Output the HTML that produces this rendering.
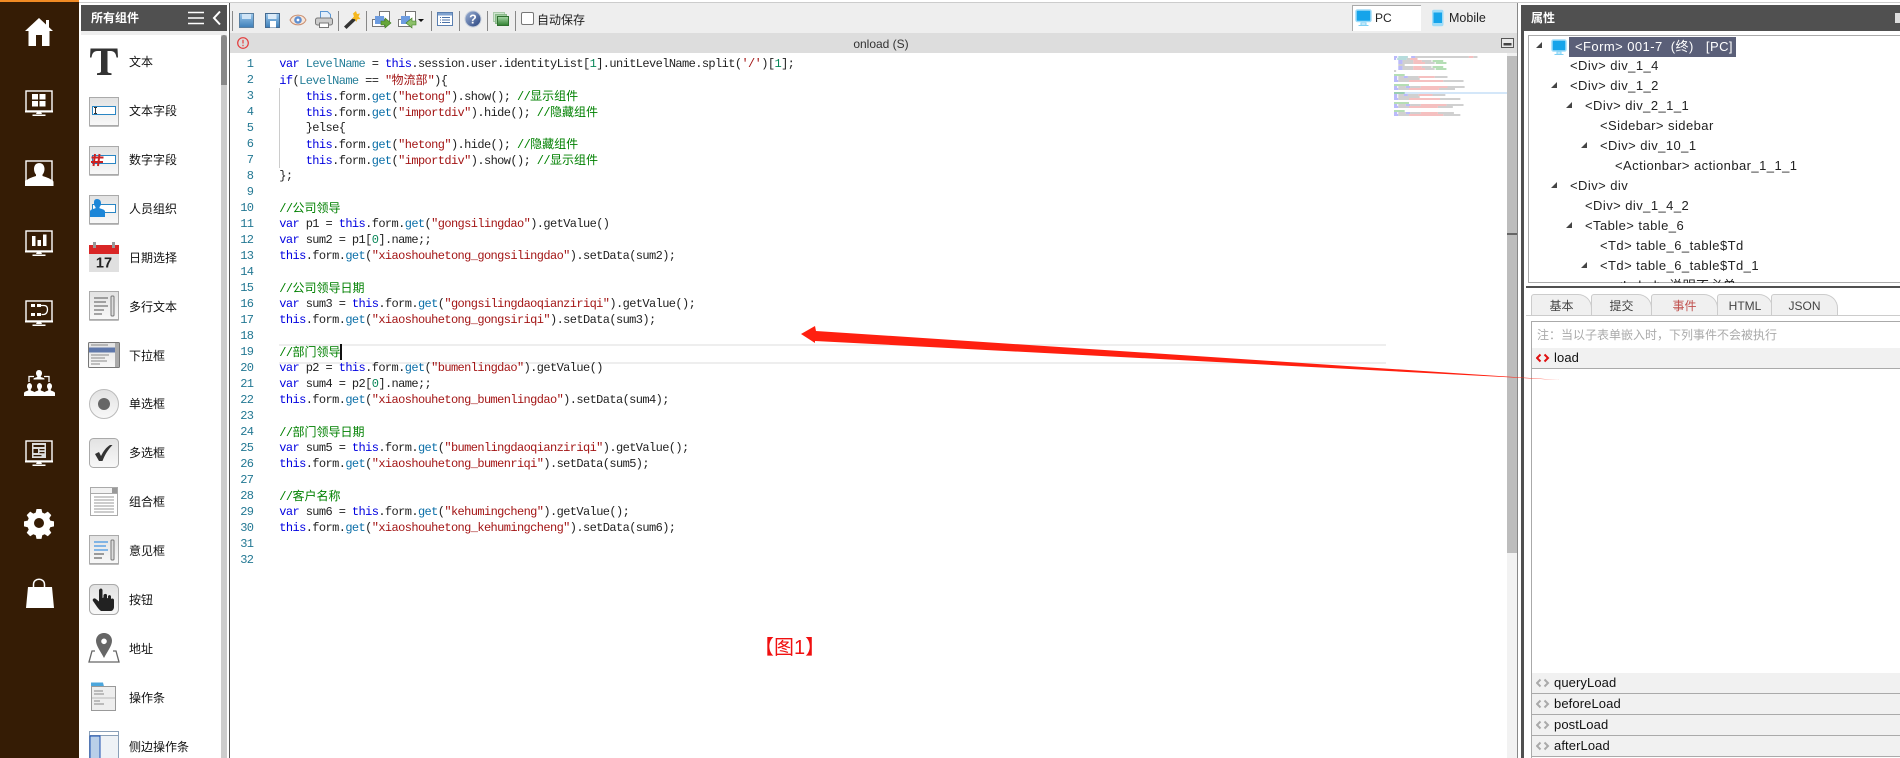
<!DOCTYPE html>
<html lang="zh">
<head>
<meta charset="utf-8">
<title>onload (S)</title>
<style>
html,body{margin:0;padding:0;width:1900px;height:758px;overflow:hidden;background:#fff}
body{position:relative;font-family:"Liberation Sans","Noto Sans CJK SC",sans-serif;font-size:12px;color:#111}
.a{position:absolute}
.p{position:absolute;left:129px;height:16px;line-height:16px;font-size:12px;color:#111;white-space:nowrap}
#code{position:absolute;left:279.3px;top:56px;font-family:"Liberation Mono","Noto Sans CJK SC",monospace;font-size:12px;line-height:16px;letter-spacing:-.6px;color:#222}
#code div{height:16px;white-space:pre;overflow:visible}
#code b{font-family:"Noto Sans CJK SC",sans-serif;font-weight:400;letter-spacing:0;line-height:16px}
#nums{position:absolute;left:230px;width:23.4px;top:56px;text-align:right;font-family:"Liberation Mono",monospace;font-size:12px;line-height:16px;letter-spacing:-.6px;color:#237893}
.k{color:#0000e0}.s{color:#a31515}.c{color:#008000}.t{color:#267f99}.g{color:#0b6fa8}.n{color:#098658}
.tr{position:absolute;height:20px;line-height:20px;font-size:13px;letter-spacing:.44px;color:#222;white-space:pre}
.tab{position:absolute;top:294px;height:20px;line-height:22px;background:#f0f0f0;border:1px solid #ccc;border-bottom:0;border-radius:3px 14px 0 0;text-align:center;font-size:12px;color:#444;box-sizing:content-box}
.ev{position:absolute;left:1532px;right:0;height:20px;background:#f1f1f1;border-bottom:1px solid #aaa;line-height:20px;font-size:13px;letter-spacing:.1px;color:#111}
.ev span{position:absolute;left:22px}
.ev svg{position:absolute;left:4px;top:5px}
</style>
</head>
<body>
<!-- page top lines -->
<div class="a" style="left:79px;top:2px;width:1821px;height:1px;background:#ccc"></div>
<!-- left rail -->
<div class="a" style="left:0;top:0;width:79px;height:758px;background:#351c05"></div>
<div class="a" style="left:0;top:0;width:79px;height:2px;background:#f08a24"></div>

<svg class="a" style="left:0;top:0" width="79" height="758" viewBox="0 0 79 758">
<defs>
<g id="mon"><rect x="1" y="1" width="26" height="20" fill="none" stroke="#fff" stroke-width="1.4"/><rect x="0" y="20.500" width="28" height="2" fill="#fff"/><path d="M12 22h4l1 2h-6z" fill="#fff"/><rect x="7.500" y="24.500" width="13" height="1.500" fill="#fff"/></g>
<linearGradient id="gb" x1="0" y1="0" x2="0" y2="1"><stop offset="0" stop-color="#e2e2e2"/><stop offset="1" stop-color="#f8f8f8"/></linearGradient>
<linearGradient id="gs" x1="0" y1="0" x2="0" y2="1"><stop offset="0" stop-color="#9cc8ec"/><stop offset="1" stop-color="#3e7fb8"/></linearGradient>
<linearGradient id="gh" x1="0" y1="0" x2="1" y2="1"><stop offset="0" stop-color="#9fb4d8"/><stop offset="1" stop-color="#24407c"/></linearGradient>
<linearGradient id="gg" x1="0" y1="0" x2="0" y2="1"><stop offset="0" stop-color="#a8d8a8"/><stop offset="1" stop-color="#2f7f2f"/></linearGradient>
</defs>
<path fill="#fff" d="M39 18 25 31h3.500v15h7.500v-11h6v11h7.500V31H53l-4-3.700V20h-3v4.500z"/>
<use href="#mon" x="25" y="90"/><path fill="#fff" d="M32 94h6v5.500h-6zM39.500 94h6v5.500h-6zM32 101h6v5.500h-6zM39.500 101h6v5.500h-6z"/>
<use href="#mon" x="25" y="160"/><path fill="#fff" d="M39 163c3.800 0 5.500 2.800 5.500 6 0 2.600-1 4.400-2 5.600v1.400c3 1 6.500 2 8.500 3.500 1 .8 2.500 1 2.500 2.500v4H25v-4c0-1.500 1.500-1.700 2.500-2.500 2-1.500 5.500-2.500 8.500-3.500v-1.400c-1-1.200-2-3-2-5.600 0-3.200 1.700-6 5.500-6z"/>
<use href="#mon" x="25" y="230"/><path fill="#fff" d="M32 236h3.500v10H32zM37.500 240h3.500v6h-3.500zM43 234.500h3.500V246H43z"/>
<use href="#mon" x="25" y="300"/><path fill="#fff" d="M31 304h4v3h-4zM37 304h4v3h-4zM31 313h4v3h-4zM37 313h4v3h-4z"/><path fill="none" stroke="#fff" stroke-width="1.300" d="M41 305.500h3c3 0 3.500 2 3.500 4s-1 5-4 5h-2"/>
<g fill="#fff"><path d="M39 370c2 0 3 1.500 3 3.200 0 1.300-.6 2.300-1.200 3v.8c1.300.5 2.700.8 3.700 1.500v1H33.500v-1c1-.7 2.400-1 3.700-1.500v-.8c-.6-.7-1.200-1.700-1.200-3 0-1.700 1-3.200 3-3.200z"/><path id="op" d="M29 383c2 0 3 1.500 3 3.200 0 1.300-.6 2.300-1.200 3v1.300c1.500.6 3.400 1 4.200 2.200v3.300H24v-3.300c.8-1.200 2.700-1.600 4.200-2.200v-1.300c-.6-.7-1.200-1.700-1.200-3 0-1.700 1-3.200 3-3.200z"/><use href="#op" x="10"/><use href="#op" x="20"/></g>
<path fill="none" stroke="#fff" stroke-width="1.300" d="M29 382v-5.500h5M49 382v-5.500h-5"/>
<use href="#mon" x="25" y="440"/><path fill="#ddd" d="M32 443h14v15H32z"/><path fill="#351c05" d="M33.500 445h11v2h-11zM33.500 449h4.500v4h-4.500zM39.500 449h5v1.200h-5zM39.500 452h5v1.200h-5zM33.500 455h8v1.200h-8z"/>
<path fill="#fff" fill-rule="evenodd" d="M36.500 509h5l.8 3.600 2.400 1 3.100-2 3.500 3.500-2 3.100 1 2.400 3.700.8v5l-3.700.8-1 2.400 2 3.100-3.500 3.500-3.100-2-2.400 1-.8 3.700h-5l-.8-3.700-2.400-1-3.100 2-3.500-3.500 2-3.100-1-2.400-3.700-.8v-5l3.700-.8 1-2.400-2-3.100 3.500-3.500 3.100 2 2.400-1zM39 518a5 5 0 1 0 0 10 5 5 0 0 0 0-10z"/>
<path fill="#fff" d="M28 587h24l2 21H26z"/>
<path fill="none" stroke="#fff" stroke-width="1.500" d="M33.500 590v-5.500c0-7 11-7 11 0v5.500"/>
</svg>

<!-- component panel -->
<div class="a" style="left:81px;top:5px;width:146px;height:26px;background:#505050"></div>
<div class="a" style="left:91px;top:10px;color:#fff;font-weight:700;font-size:12px;line-height:16px">所有组件</div>
<svg class="a" style="left:187px;top:10px" width="38" height="16"><path d="M1 2.500h16M1 8h16M1 13.500h16" stroke="#fff" stroke-width="1.500"/><path d="M33 1.500 27 8l6 6.500" fill="none" stroke="#fff" stroke-width="2"/></svg>
<div class="a" style="left:81px;top:31px;width:146px;height:4px;background:#eee"></div>
<div class="a" style="left:221px;top:35px;width:6px;height:723px;background:#ccc"></div>
<div class="a" style="left:221px;top:35px;width:6px;height:50px;background:#888;border-radius:3px 3px 0 0"></div>
<div class="a" style="left:229px;top:3px;width:1px;height:755px;background:#555"></div>

<div class="p" style="top:54px">文本</div>
<div class="p" style="top:103px">文本字段</div>
<div class="p" style="top:152px">数字字段</div>
<div class="p" style="top:201px">人员组织</div>
<div class="p" style="top:250px">日期选择</div>
<div class="p" style="top:299px">多行文本</div>
<div class="p" style="top:348px">下拉框</div>
<div class="p" style="top:396px">单选框</div>
<div class="p" style="top:445px">多选框</div>
<div class="p" style="top:494px">组合框</div>
<div class="p" style="top:543px">意见框</div>
<div class="p" style="top:592px">按钮</div>
<div class="p" style="top:641px">地址</div>
<div class="p" style="top:690px">操作条</div>
<div class="p" style="top:739px">侧边操作条</div>

<svg class="a" style="left:0;top:0" width="230" height="758" viewBox="0 0 230 758">
<defs>
<g id="bx"><rect x="0" y="1" width="30" height="29" rx="1" fill="#bbb"/><rect x=".5" y=".5" width="29" height="28" fill="url(#gb)" stroke="#aaa"/></g>
<g id="fld"><rect x="3.500" y="9.500" width="23" height="8" fill="#fff" stroke="#2a86c4"/></g>
</defs>
<path transform="translate(89 47)" fill="#333" d="M1.500 1.500h27l.5 9h-1.500c-.6-4-2.100-6.500-6-6.500H18.500v20c0 1.700 1 2 4 2.300V28H8v-1.700c3-.3 4-.6 4-2.300V4H8.500c-3.900 0-5.400 2.500-6 6.500H1z"/>
<g transform="translate(89 97)"><use href="#bx"/><use href="#fld"/><path d="M5 10.500h3M6.500 10.500v6M5 16.500h3" stroke="#333" fill="none"/></g>
<g transform="translate(89 146)"><use href="#bx"/><use href="#fld"/><path d="M6 8 4.500 20M10.500 8 9 20M2.500 11.500h12M2 16h12" stroke="#cc2222" stroke-width="2" fill="none"/></g>
<g transform="translate(89 195)"><use href="#bx"/><use href="#fld"/><path fill="#1c86d8" d="M8 4c2.800 0 4 2 4 4.200 0 1.700-.7 3-1.500 3.800v1.200c2 .7 5.500 1.300 5.500 3.300V22H1v-5.500c0-2 3.500-2.600 5.500-3.300V12C5.700 11.200 5 9.900 5 8.200 5 6 5.200 4 8 4z"/></g>
<g transform="translate(89 242)"><path d="M0 3h30v27H0z" fill="#e0e0e0"/><path d="M0 3h30v9H0z" fill="#d92626"/><path d="M4 0h3v6H4zM23 0h3v6h-3z" fill="#999"/><text x="15" y="25.500" text-anchor="middle" font-family="Liberation Sans" font-weight="700" font-size="14.500" fill="#222">17</text></g>
<g transform="translate(89 291)"><use href="#bx"/><path d="M5 7h14M5 11h12M5 15h14M5 19h10M5 23h8" stroke="#555" fill="none"/><rect x="22" y="5" width="3" height="20" rx="1" fill="#ddd" stroke="#777"/></g>
<g transform="translate(88 342)"><rect x=".5" y=".5" width="31" height="25" rx="1" fill="url(#gb)" stroke="#777"/><rect x="1" y="5.500" width="26" height="5" fill="#5f78ab"/><path d="M3 3h17M3 13h18M3 16h14M3 19h16M3 22h9" stroke="#888" fill="none"/><rect x="27" y="1" width="4" height="24" fill="#aaa"/></g>
<g transform="translate(89 389)"><circle cx="15" cy="15" r="14.500" fill="url(#gb)" stroke="#bbb"/><circle cx="15" cy="15" r="6" fill="#666"/></g>
<g transform="translate(89 438)"><rect x=".5" y=".5" width="29" height="29" rx="4" fill="url(#gb)" stroke="#aaa"/><path d="M6 16l4-2 2 4c2.500-5 5-8.500 9-11h2.500c-4.500 4.500-7.500 9.500-10 16h-3.500z" fill="#333"/></g>
<g transform="translate(90 487)"><rect x=".5" y=".5" width="27" height="28" fill="#fff" stroke="#aaa"/><rect x=".5" y=".5" width="27" height="6" fill="#f2f2f2" stroke="#aaa"/><rect x="22" y="1" width="5" height="5" fill="#999"/><path d="M4 10h20M4 13h20M4 16h20M4 19h20M4 22h20M4 25h20" stroke="#999" fill="none"/></g>
<g transform="translate(89 535)"><use href="#bx"/><path d="M5 7h14M5 11h12M5 15h14" stroke="#1a7fe0" fill="none"/><path d="M5 19h10M5 23h8" stroke="#444" fill="none"/><rect x="22" y="5" width="3" height="20" rx="1" fill="#ddd" stroke="#777"/></g>
<g transform="translate(89 584)"><rect x=".5" y=".5" width="29" height="30" rx="5" fill="url(#gb)" stroke="#aaa"/><path d="M10 6c1-2 3-2 3.500 0V14l1-.5V11c1-1.500 3-1.500 3.500 0v3l1 .2V12c1-1.500 3-1 3 .5v2.500c1-1 3-.5 3 1V23c0 2-1.500 4-3 4H12c-3-2-5-6-8-10-1-1.800 1-3.500 3-2l3 2.500z" fill="#222"/></g>
<g transform="translate(89 633)"><path d="M6 18H3L0 29h30l-3-11h-3" fill="#fff" stroke="#666" stroke-width="1.300"/><path fill="#666" fill-rule="evenodd" d="M15 0c5 0 8 3.700 8 7.800C23 13 18 19 15 25 12 19 7 13 7 7.800 7 3.700 10 0 15 0zm0 5.500a2.800 2.800 0 1 0 0 5.600 2.800 2.800 0 0 0 0-5.600z"/></g>
<g transform="translate(91 682)"><path d="M0 .5h12l1 4H0z" fill="#4ba6dc"/><rect x=".5" y="4.500" width="24" height="24" fill="#eee" stroke="#999"/><path d="M3 9h9M3 12h10M3 19h6M3 22h10" stroke="#888" fill="none"/><path d="M1 16h23" stroke="#bbb" fill="none"/></g>
<g transform="translate(89 731)"><rect x=".5" y=".5" width="29" height="29" fill="#eef2f6" stroke="#8aa0b8"/><rect x=".5" y=".5" width="29" height="4" fill="#fff" stroke="#8aa0b8"/><rect x="1" y="5" width="10" height="25" fill="#b9cfe8" stroke="#1c4fb0"/></g>
</svg>

<!-- toolbar -->
<div class="a" style="left:230px;top:3px;width:1287px;height:30px;background:#eee"></div>
<svg class="a" style="left:232px;top:5px" width="300" height="28" viewBox="0 0 300 28">
<g stroke="#888"><path d="M.5 6v20M106.500 6v20M134.500 6v20M199.500 6v20M227.500 6v20M255.500 6v20M283.500 6v20"/></g>
<rect x="7.500" y="8.500" width="14" height="14" fill="url(#gs)" stroke="#5a7fa0"/><rect x="10" y="9" width="9" height="5" fill="#cfe4f6"/>
<rect x="33.500" y="8.500" width="14" height="14" fill="url(#gs)" stroke="#456a90"/><rect x="36" y="9" width="8.500" height="5" fill="#dcebf8"/><rect x="38" y="16" width="6" height="6.500" fill="#fff"/>
<path d="M58 15c3-6.500 13-6.500 16 0-3 6.500-13 6.500-16 0z" fill="#f6e6da" stroke="#c98e70"/><circle cx="66" cy="15" r="3.800" fill="#5f8fd0"/><circle cx="66" cy="15" r="1.400" fill="#fff"/>
<path d="M88.500 13V6.500h7l3 3V13" fill="#e4effa" stroke="#5b97d4"/><rect x="83.500" y="13" width="17" height="7" rx="2" fill="#ccc" stroke="#777"/><rect x="87.500" y="18" width="9" height="4.500" fill="#fff" stroke="#777"/>
<path d="M112 21.500 123 11l2.500 2.500L114.500 24z" fill="#333"/><path d="M124 6l1 3 3-.5-1.500 3 2 2.500-3 .2-1.300 2.800-1.200-2.800-3-.5 2-2.200-1-3z" fill="#f5b81f"/>
<rect x="147.500" y="6.500" width="10" height="10" fill="#fff" stroke="#777"/><rect x="140.500" y="14.500" width="12" height="7" fill="#fff" stroke="#777"/><rect x="143" y="11" width="9" height="8" fill="#6d9ce0"/><path d="M149 16h4v-3l6 5-6 5v-3h-4z" fill="#66a63a" stroke="#3e7a20" stroke-width=".6"/>
<rect x="173.500" y="6.500" width="10" height="10" fill="#fff" stroke="#777"/><rect x="166.500" y="14.500" width="12" height="7" fill="#fff" stroke="#777"/><rect x="169" y="11" width="9" height="8" fill="#6d9ce0"/><path d="M184 16h-4v-3l-6 5 6 5v-3h4z" fill="#8cc06a" stroke="#3e7a20" stroke-width=".6"/>
<path d="M186 14h6l-3 3z" fill="#111"/>
<rect x="205.500" y="7.500" width="15" height="13" fill="#fff" stroke="#5a7fb0"/><rect x="206" y="8" width="14" height="2.500" fill="#7fa2cf"/><path d="M208 12.500h1M210 12.500h8M208 15h1M210 15h8M208 17.500h1M210 17.500h8" stroke="#4a72a8"/>
<circle cx="241" cy="14" r="8" fill="url(#gh)" stroke="#c6cfdc"/><text x="241" y="18.500" text-anchor="middle" font-family="Liberation Sans" font-weight="700" font-size="12.500" fill="#fff">?</text>
<rect x="261.500" y="7.500" width="11" height="9" fill="#cfe6cf" stroke="#a9c9a9"/><rect x="263.500" y="9.500" width="11" height="9" fill="#9fcc9f" stroke="#8ab88a"/><rect x="265.500" y="11.500" width="11" height="9" fill="url(#gg)" stroke="#2f6f2f"/>
</svg>
<div class="a" style="left:521px;top:12px;width:11px;height:11px;border:1px solid #777;border-radius:2px;background:#fff"></div>
<div class="a" style="left:537px;top:12px;line-height:16px;font-size:12px;color:#222">自动保存</div>

<div class="a" style="left:1352px;top:5px;width:68px;height:25px;background:#fff;border:1px solid #aaa;border-width:1px 0 0 1px"></div>
<svg class="a" style="left:1355px;top:9px" width="18" height="18"><rect x="1" y="1" width="15" height="11.500" rx="1.500" fill="#16a4ea" stroke="#9fdcf8" stroke-width="1.500"/><path d="M6 14h5v2H6zM3.500 16.500h10" stroke="#7fd0f4" fill="#fff"/></svg>
<div class="a" style="left:1375px;top:10px;line-height:16px;font-size:12px;color:#222">PC</div>
<svg class="a" style="left:1431px;top:9px" width="14" height="18"><rect x="1" y=".8" width="11.500" height="16.500" rx="2" fill="#9fdcf8"/><rect x="2.500" y="3.500" width="8.500" height="10.500" fill="#16a4ea"/></svg>
<div class="a" style="left:1449px;top:10px;line-height:16px;font-size:12.500px;color:#222">Mobile</div>

<!-- editor title -->
<div class="a" style="left:230px;top:33px;width:1287px;height:20px;background:#ddd"></div>
<svg class="a" style="left:236px;top:36px" width="14" height="14"><circle cx="7" cy="7" r="5.300" fill="none" stroke="#e43a3a" stroke-width="1.200"/><path d="M7 3.800v3.700" stroke="#e43a3a" stroke-width="1.200"/><path d="M7 8.800v1.400" stroke="#e43a3a" stroke-width="1.200"/></svg>
<div class="a" style="left:845px;top:36px;width:72px;text-align:center;line-height:16px;font-size:12px;color:#333">onload (S)</div>
<svg class="a" style="left:1501px;top:38px" width="14" height="11"><rect x=".5" y=".5" width="12" height="9" fill="#e8e8e8" stroke="#555"/><rect x="2.500" y="5" width="8" height="2.500" fill="#444"/></svg>

<!-- current line -->
<div class="a" style="left:279px;top:344px;width:1107px;height:20px;box-sizing:border-box;border:2px solid #eee;border-width:2px 0"></div>
<div class="a" style="left:340px;top:344px;width:2px;height:16px;background:#111"></div>
<div class="a" style="left:279px;top:88px;width:1px;height:80px;background:#ccc"></div>

<div id="nums">1<br>2<br>3<br>4<br>5<br>6<br>7<br>8<br>9<br>10<br>11<br>12<br>13<br>14<br>15<br>16<br>17<br>18<br>19<br>20<br>21<br>22<br>23<br>24<br>25<br>26<br>27<br>28<br>29<br>30<br>31<br>32</div>

<div id="code">
<div><span class="k">var</span> <span class="t">LevelName</span> = <span class="k">this</span>.session.user.identityList[<span class="n">1</span>].unitLevelName.split(<span class="s">'/'</span>)[<span class="n">1</span>];</div>
<div><span class="k">if</span>(<span class="t">LevelName</span> == <span class="s">"<b>物流部</b>"</span>){</div>
<div>    <span class="k">this</span>.form.<span class="g">get</span>(<span class="s">"hetong"</span>).show(); <span class="c">//<b>显示组件</b></span></div>
<div>    <span class="k">this</span>.form.<span class="g">get</span>(<span class="s">"importdiv"</span>).hide(); <span class="c">//<b>隐藏组件</b></span></div>
<div>    }else{</div>
<div>    <span class="k">this</span>.form.<span class="g">get</span>(<span class="s">"hetong"</span>).hide(); <span class="c">//<b>隐藏组件</b></span></div>
<div>    <span class="k">this</span>.form.<span class="g">get</span>(<span class="s">"importdiv"</span>).show(); <span class="c">//<b>显示组件</b></span></div>
<div>};</div>
<div> </div>
<div><span class="c">//<b>公司领导</b></span></div>
<div><span class="k">var</span> p1 = <span class="k">this</span>.form.<span class="g">get</span>(<span class="s">"gongsilingdao"</span>).getValue()</div>
<div><span class="k">var</span> sum2 = p1[<span class="n">0</span>].name;;</div>
<div><span class="k">this</span>.form.<span class="g">get</span>(<span class="s">"xiaoshouhetong_gongsilingdao"</span>).setData(sum2);</div>
<div> </div>
<div><span class="c">//<b>公司领导日期</b></span></div>
<div><span class="k">var</span> sum3 = <span class="k">this</span>.form.<span class="g">get</span>(<span class="s">"gongsilingdaoqianziriqi"</span>).getValue();</div>
<div><span class="k">this</span>.form.<span class="g">get</span>(<span class="s">"xiaoshouhetong_gongsiriqi"</span>).setData(sum3);</div>
<div> </div>
<div><span class="c">//<b>部门领导</b></span></div>
<div><span class="k">var</span> p2 = <span class="k">this</span>.form.<span class="g">get</span>(<span class="s">"bumenlingdao"</span>).getValue()</div>
<div><span class="k">var</span> sum4 = p2[<span class="n">0</span>].name;;</div>
<div><span class="k">this</span>.form.<span class="g">get</span>(<span class="s">"xiaoshouhetong_bumenlingdao"</span>).setData(sum4);</div>
<div> </div>
<div><span class="c">//<b>部门领导日期</b></span></div>
<div><span class="k">var</span> sum5 = <span class="k">this</span>.form.<span class="g">get</span>(<span class="s">"bumenlingdaoqianziriqi"</span>).getValue();</div>
<div><span class="k">this</span>.form.<span class="g">get</span>(<span class="s">"xiaoshouhetong_bumenriqi"</span>).setData(sum5);</div>
<div> </div>
<div><span class="c">//<b>客户名称</b></span></div>
<div><span class="k">var</span> sum6 = <span class="k">this</span>.form.<span class="g">get</span>(<span class="s">"kehumingcheng"</span>).getValue();</div>
<div><span class="k">this</span>.form.<span class="g">get</span>(<span class="s">"xiaoshouhetong_kehumingcheng"</span>).setData(sum6);</div>
</div>

<!-- minimap -->
<div class="a" style="left:1394px;top:92px;width:113px;height:2px;background:#d4e7f9"></div>
<svg class="a" style="left:1394px;top:56px" width="113" height="64" viewBox="0 0 105.600 64" preserveAspectRatio="none" opacity=".55" fill="none" stroke-width="1.300">
<path stroke="#3a3af0" d="M0 1h3M16 1h4M0 3h2M4 5h4M4 7h4M4 11h4M4 13h4M0 21h3M9 21h4M0 23h3M0 25h4M0 31h3M11 31h4M0 33h4M0 39h3M9 39h4M0 41h3M0 43h4M0 49h3M11 49h4M0 51h4M0 57h3M11 57h4M0 59h4"/>
<path stroke="#2e9a9a" d="M4 1h9M3 3h9"/>
<path stroke="#777" d="M20 1h50M74 1h4M12 3h3M8 5h10M26 5h9M8 7h10M29 7h9M4 9h6M8 11h10M26 11h9M8 13h10M29 13h9M0 15h2M4 21h5M13 21h10M38 21h12M4 23h20M4 25h10M46 25h19M4 31h7M15 31h10M50 31h16M4 33h10M42 33h15M4 39h5M13 39h10M36 39h12M4 41h20M4 43h10M43 43h19M4 49h7M15 49h10M49 49h16M4 51h10M41 51h14M4 57h7M15 57h10M41 57h15M4 59h10M46 59h16"/>
<path stroke="#e24a4a" d="M70 1h4M15 3h7M18 5h8M18 7h11M18 11h8M18 13h11M23 21h15M14 25h32M25 31h25M14 33h28M23 39h13M14 43h29M25 49h24M14 51h27M25 57h16M14 59h32"/>
<path stroke="#2aa02a" d="M36 5h10M39 7h10M36 11h10M39 13h10M0 19h10M0 29h14M0 37h10M0 47h14M0 55h10"/>
</svg>

<!-- editor scrollbar -->
<div class="a" style="left:1507px;top:53px;width:10px;height:705px;background:#f2f2f2"></div>
<div class="a" style="left:1507px;top:56px;width:10px;height:497px;background:#bdbdbd"></div>
<div class="a" style="left:1507px;top:233px;width:10px;height:2px;background:#666"></div>
<div class="a" style="left:1517px;top:3px;width:1px;height:755px;background:#888"></div>

<div class="a" style="left:754px;top:633px;line-height:30px;font-size:20px;color:#f01010;white-space:nowrap">【图1】</div>

<!-- right panel -->
<div class="a" style="left:1521px;top:5px;width:379px;height:26px;background:#505050"></div>
<div class="a" style="left:1531px;top:10px;color:#fff;font-weight:700;font-size:12px;line-height:16px">属性</div>
<div class="a" style="left:1895px;top:13px;width:5px;height:10px;background:#ddd"></div>
<div class="a" style="left:1521px;top:31px;width:3px;height:727px;background:#505050"></div>

<div class="a" style="left:1528px;top:35px;width:372px;height:248px;box-sizing:border-box;border:1px solid #aaa;border-right:0;overflow:hidden;background:#fff"></div>
<div class="a" style="left:1569px;top:37px;width:167px;height:20px;background:#5a5f78"></div>
<svg class="a" style="left:1550px;top:37px" width="18" height="20"><rect x="2" y="3" width="14" height="11" rx="1.500" fill="#16a4ea" stroke="#9fdcf8" stroke-width="1.500"/><path d="M7 15h4v2H7zM4.500 17.500h9" stroke="#7fd0f4" fill="#fff"/></svg>
<svg class="a" style="left:1530px;top:36px" width="70" height="247" fill="#444">
<path d="M12 6v6H6zM27 46v6h-6zM42 66v6h-6zM57 106v6h-6zM27 146v6h-6zM42 186v6h-6zM57 226v6h-6z"/>
</svg>
<div class="tr" style="left:1575px;top:36px;color:#fff">&lt;Form&gt; 001-7  (<span style="font-family:'Noto Sans CJK SC',sans-serif">终</span>)   [PC]</div>
<div class="tr" style="left:1570px;top:56px">&lt;Div&gt; div_1_4</div>
<div class="tr" style="left:1570px;top:76px">&lt;Div&gt; div_1_2</div>
<div class="tr" style="left:1585px;top:96px">&lt;Div&gt; div_2_1_1</div>
<div class="tr" style="left:1600px;top:116px">&lt;Sidebar&gt; sidebar</div>
<div class="tr" style="left:1600px;top:136px">&lt;Div&gt; div_10_1</div>
<div class="tr" style="left:1615px;top:156px">&lt;Actionbar&gt; actionbar_1_1_1</div>
<div class="tr" style="left:1570px;top:176px">&lt;Div&gt; div</div>
<div class="tr" style="left:1585px;top:196px">&lt;Div&gt; div_1_4_2</div>
<div class="tr" style="left:1585px;top:216px">&lt;Table&gt; table_6</div>
<div class="tr" style="left:1600px;top:236px">&lt;Td&gt; table_6_table$Td</div>
<div class="tr" style="left:1600px;top:256px">&lt;Td&gt; table_6_table$Td_1</div>
<div class="tr" style="left:1615px;top:276px;height:7px;overflow:hidden">&lt;Label&gt; 说明不必单</div>

<div class="a" style="left:1526px;top:286px;width:374px;height:2px;background:#505050"></div>
<div class="tab" style="left:1531px;width:59px">基本</div>
<div class="tab" style="left:1591px;width:59px">提交</div>
<div class="tab" style="left:1651px;width:65px;color:#c0504d">事件</div>
<div class="tab" style="left:1717px;width:54px">HTML</div>
<div class="tab" style="left:1771px;width:65px">JSON</div>
<div class="a" style="left:1526px;top:315px;width:374px;height:1px;background:#ccc"></div>

<div class="a" style="left:1531px;top:321px;width:369px;height:437px;box-sizing:border-box;border:1px solid #aaa;border-right:0;border-bottom:0;background:#fff"></div>
<div class="a" style="left:1537px;top:327px;line-height:16px;font-size:12px;color:#aaa;white-space:nowrap">注：当以子表单嵌入时，下列事件不会被执行</div>
<div class="ev" style="top:348px"><svg width="14" height="10"><path d="M4.500 1.500 1 5l3.500 3.500M8.500 1.500 12 5 8.500 8.500" fill="none" stroke="#e01010" stroke-width="2"/></svg><span>load</span></div>
<div class="ev" style="top:673px"><svg width="14" height="10"><path d="M4.500 1.500 1 5l3.500 3.500M8.500 1.500 12 5 8.500 8.500" fill="none" stroke="#aaa" stroke-width="2"/></svg><span>queryLoad</span></div>
<div class="ev" style="top:694px"><svg width="14" height="10"><path d="M4.500 1.500 1 5l3.500 3.500M8.500 1.500 12 5 8.500 8.500" fill="none" stroke="#aaa" stroke-width="2"/></svg><span>beforeLoad</span></div>
<div class="ev" style="top:715px"><svg width="14" height="10"><path d="M4.500 1.500 1 5l3.500 3.500M8.500 1.500 12 5 8.500 8.500" fill="none" stroke="#aaa" stroke-width="2"/></svg><span>postLoad</span></div>
<div class="ev" style="top:736px"><svg width="14" height="10"><path d="M4.500 1.500 1 5l3.500 3.500M8.500 1.500 12 5 8.500 8.500" fill="none" stroke="#aaa" stroke-width="2"/></svg><span>afterLoad</span></div>

<!-- annotation arrow -->
<svg class="a" style="left:0;top:0;pointer-events:none" width="1900" height="758"><polygon points="801,334 815,326 816,331 1560,380 815,341 815,343" fill="#ff2010"/></svg>
</body>
</html>
